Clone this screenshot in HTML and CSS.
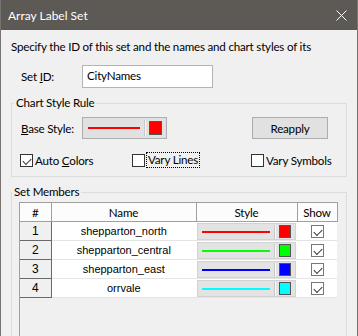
FILE: index.html
```html
<!DOCTYPE html>
<html lang="en">
<head>
    <meta charset="utf-8" />
    <title>Array Label Set</title>
    <link rel="stylesheet" href="styles.css">
</head>
<body>
    <div class="window">
        <div class="titlebar">
            <span class="title">Array Label Set</span>
            <span class="close">
                <svg width="11" height="11" viewBox="0 0 11 11"><path d="M0.5 0.5 L10.5 10.5 M10.5 0.5 L0.5 10.5" stroke="#fff" stroke-width="1"/></svg>
            </span>
        </div>

        <div class="content">
            <p class="intro">Specify the ID of this set and the names and chart styles of its</p>

            <div class="id-row">
                <label class="id-label">Set <u>I</u>D:</label>
                <div class="text-input">CityNames</div>
            </div>

            <fieldset class="group rule-group">
                <legend>Chart Style Rule</legend>
                <div class="base-row">
                    <span class="base-label"><u>B</u>ase Style:</span>
                    <span class="style-btn">
                        <span class="line red-line"></span>
                        <span class="sep"></span>
                        <span class="swatch red"></span>
                    </span>
                    <button class="btn">Reapply</button>
                </div>
                <div class="check-row">
                    <span class="check-item"><span class="box checked"></span><span>Auto <u>C</u>olors</span></span>
                    <span class="check-item"><span class="box"></span><span class="focus">Vary Lines</span></span>
                    <span class="check-item"><span class="box"></span><span>Vary Symbols</span></span>
                </div>
            </fieldset>

            <fieldset class="group members-group">
                <legend>Set Members</legend>
                <div class="grid-box">
                    <table class="grid">
                        <colgroup>
                            <col class="c-num"><col class="c-name"><col class="c-style"><col class="c-show">
                        </colgroup>
                        <tr>
                            <th>#</th><th>Name</th><th>Style</th><th>Show</th>
                        </tr>
                        <tr>
                            <td class="num">1</td>
                            <td class="name">shepparton_north</td>
                            <td class="style-cell"><span class="chip"><span class="line red-line"></span><span class="sep"></span><span class="swatch red"></span></span></td>
                            <td class="show"><span class="box small checked"></span></td>
                        </tr>
                        <tr>
                            <td class="num">2</td>
                            <td class="name">shepparton_central</td>
                            <td class="style-cell"><span class="chip"><span class="line green-line"></span><span class="sep"></span><span class="swatch green"></span></span></td>
                            <td class="show"><span class="box small checked"></span></td>
                        </tr>
                        <tr>
                            <td class="num">3</td>
                            <td class="name">shepparton_east</td>
                            <td class="style-cell"><span class="chip"><span class="line blue-line"></span><span class="sep"></span><span class="swatch blue"></span></span></td>
                            <td class="show"><span class="box small checked"></span></td>
                        </tr>
                        <tr>
                            <td class="num">4</td>
                            <td class="name">orrvale</td>
                            <td class="style-cell"><span class="chip"><span class="line cyan-line"></span><span class="sep"></span><span class="swatch cyan"></span></span></td>
                            <td class="show"><span class="box small checked"></span></td>
                        </tr>
                    </table>
                </div>
            </fieldset>
        </div>
    </div>
</body>
</html>
```

FILE: styles.css
```css
* {
    box-sizing: border-box;
}

body {
    margin: 0;
    font-family: Lato, "Liberation Sans", sans-serif;
    font-size: 11.6px;
    letter-spacing: -0.2px;
    color: #000;
    background: #fff;
}

.window {
    width: 358px;
    height: 336px;
    overflow: hidden;
    background: #f0f0f0;
    border-left: 1px solid #77736f;
    border-right: 1px solid #77736f;
}

.titlebar {
    height: 30px;
    display: flex;
    align-items: center;
    padding-left: 7px;
    background: #5d5955;
    color: #fff;
    font-size: 12px;
    letter-spacing: 0;
}

.title {
    flex: 1;
}

.close {
    width: 32px;
    height: 30px;
    display: flex;
    align-items: center;
    justify-content: center;
}

.content {
    padding: 9px 10px 0;
}

.intro {
    margin: 0;
    line-height: 16px;
    white-space: nowrap;
}

.id-row {
    display: flex;
    align-items: center;
    height: 23px;
    margin-top: 10px;
    padding-left: 10px;
}

.id-label {
    width: 61px;
}

.text-input {
    width: 131px;
    height: 23px;
    padding: 3px 4px;
    background: #fff;
    border: 1px solid #b4b4b4;
}

.group {
    margin: 7px 0 0;
    padding: 6px 9px 8px;
    border: 1px solid #dcdcdc;
    min-width: 0;
}

.group legend {
    margin-left: -7px;
    padding: 0 2px;
    line-height: 16px;
}

.base-row {
    display: flex;
    align-items: center;
    height: 22px;
}

.base-label {
    width: 61px;
}

.style-btn {
    width: 85px;
    height: 22px;
    display: flex;
    align-items: center;
    padding: 0 4px 0 5px;
    background: #e1e1e1;
    border: 1px solid #adadad;
}

.line {
    height: 2px;
    flex: 1;
}

.sep {
    width: 2px;
    height: 16px;
    margin: 0 3px 0 4px;
    border-left: 1px solid #c8c8c8;
    border-right: 1px solid #fafafa;
}

.swatch {
    width: 13px;
    height: 14px;
    border: 1px solid #555;
}

.red-line { background: #f00; }
.green-line { background: #0f0; }
.blue-line { background: #00f; }
.cyan-line { background: #0ff; }
.red { background: #f00; }
.green { background: #0f0; }
.blue { background: #00f; }
.cyan { background: #0ff; }

.btn {
    width: 76px;
    height: 22px;
    margin-left: 85px;
    font: inherit;
    letter-spacing: inherit;
    background: #e1e1e1;
    border: 1px solid #adadad;
    padding: 0;
}

.check-row {
    display: grid;
    grid-template-columns: 112px 119px auto;
    height: 16px;
    margin-top: 13px;
    margin-left: -1px;
    white-space: nowrap;
}

.check-item {
    display: flex;
    align-items: center;
}

.box {
    width: 13px;
    height: 13px;
    margin-right: 2px;
    background: #fff;
    border: 1px solid #333;
    position: relative;
}

.box.checked::after {
    content: "";
    position: absolute;
    left: 2px;
    top: 1px;
    width: 7px;
    height: 4px;
    border-left: 1px solid #333;
    border-bottom: 1px solid #333;
    transform: translate(0, 2px) rotate(-45deg);
}

.focus {
    outline: 1px dotted #000;
    padding: 0 1px;
    line-height: 14px;
}

.members-group {
    padding: 2px 0 0 7px;
    border-bottom: none;
}

.grid-box {
    width: 318px;
    height: 140px;
    border-left: 1px solid #a0a0a0;
}

.grid {
    border-collapse: collapse;
    table-layout: fixed;
    width: 317px;
    font-family: "Liberation Sans", Arial, sans-serif;
    font-size: 11px;
    letter-spacing: 0;
}

.c-num { width: 31px; }
.c-name { width: 145px; }
.c-style { width: 101px; }
.c-show { width: 40px; }

.grid th {
    height: 19px;
    padding: 0;
    font-weight: normal;
    font-family: Lato, sans-serif;
    font-size: 11.6px;
    letter-spacing: -0.2px;
    background: #fcfcfc;
    border: 1px solid #a0a0a0;
    border-left: none;
}

.grid td {
    height: 19px;
    padding: 0;
    text-align: center;
    background: #fff;
    border-bottom: 1px solid #e4e4e4;
}

.grid td.num {
    background: #f0f0f0;
    border-right: 1px solid #696969;
    border-bottom: 1px solid #696969;
    font-size: 12px;
}

.grid td.style-cell {
    padding: 1px 0 0 1px;
}

.chip {
    display: flex;
    align-items: center;
    width: 99px;
    height: 17px;
    padding: 0 4px;
    background: #e3e3e3;
    border: 1px solid #d2d2d2;
}

.chip .sep {
    height: 14px;
}

.chip .swatch {
    width: 12px;
    height: 13px;
}

.box.small {
    display: inline-block;
    vertical-align: middle;
    border-color: #777;
    margin: 0;
}
```
